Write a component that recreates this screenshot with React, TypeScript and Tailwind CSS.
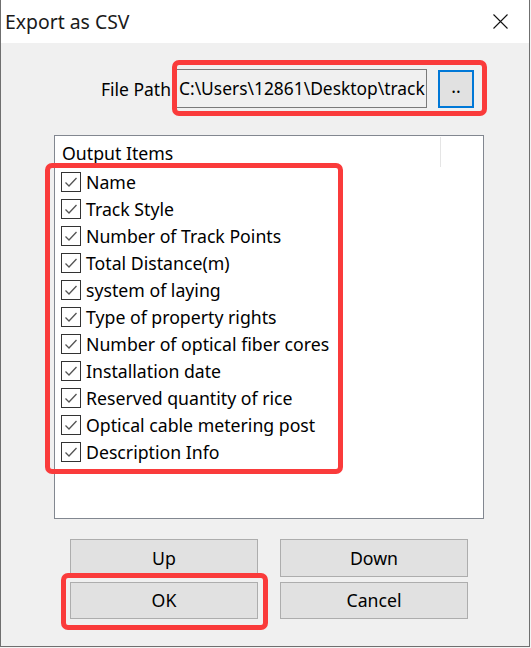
import React from "react";

const items = [
  "Name",
  "Track Style",
  "Number of Track Points",
  "Total Distance(m)",
  "system of laying",
  "Type of property rights",
  "Number of optical fiber cores",
  "Installation date",
  "Reserved quantity of rice",
  "Optical cable metering post",
  "Description Info",
];

const font = { fontFamily: '"Noto Sans", "Open Sans", sans-serif' };

function CheckBox() {
  return (
    <span className="flex h-[20px] w-[20px] shrink-0 items-center justify-center border border-[#333333] bg-white">
      <svg width="14" height="14" viewBox="0 0 14 14" fill="none">
        <path d="M1.5 7.5 L5 11 L12.5 3" stroke="#555555" strokeWidth="1.3" />
      </svg>
    </span>
  );
}

function DlgButton({ label }: { label: string }) {
  return (
    <button className="flex h-full w-[188px] items-center justify-center border border-[#adadad] bg-[#e1e1e1] text-[17.7px] text-black">
      {label}
    </button>
  );
}

export default function App() {
  return (
    <div className="relative h-[648px] w-[531px] bg-[#f4f4f4]" style={font}>
      <div className="flex h-[647px] w-[530px] flex-col border-x border-b border-[#6f6f6f] bg-[#f0f0f0]">
        {/* title bar */}
        <div className="flex h-[43px] shrink-0 items-center justify-between bg-white pl-[4px] pr-[21px]">
          <span className="text-[19.4px] text-[#1a1a1a]">Export as CSV</span>
          <svg width="15" height="15" viewBox="0 0 15 15">
            <path d="M0.5 0.5 L14.5 14.5 M14.5 0.5 L0.5 14.5" stroke="#111111" strokeWidth="1.1" />
          </svg>
        </div>

        {/* file path */}
        <div className="mt-[26px] flex h-[39px] items-center">
          <span className="w-[171px] pr-[1px] pt-[2px] text-right text-[17.5px] text-black">File Path</span>
          <div className="flex h-[39px] w-[255px] items-center overflow-hidden whitespace-nowrap border border-[#7a7a7a] bg-[#f0f0f0] pl-[6px] text-[17.4px] text-black">
            C:\Users\12861\Desktop\track
          </div>
          <button className="ml-[11px] flex h-[38px] w-[36px] items-center justify-center border-2 border-[#0078d7] bg-[#e1e1e1] pb-[4px] text-[17.7px] text-black">
            ..
          </button>
        </div>

        {/* item list */}
        <div className="ml-[53px] mt-[27px] flex h-[384px] w-[430px] flex-col border border-[#828790] bg-white">
          <div className="flex h-[32px] shrink-0 items-stretch">
            <div className="flex w-[385px] items-end pb-[1px] pl-[7px] text-[17.7px] text-black">Output Items</div>
            <div className="mt-[1px] h-[30px] w-px bg-[#e5e5e5]" />
          </div>
          <div className="flex flex-col">
            {items.map((item) => (
              <div key={item} className="flex h-[27px] items-center gap-[5px] pl-[6px]">
                <CheckBox />
                <span className="pt-[2px] text-[17.7px] leading-none text-black">{item}</span>
              </div>
            ))}
          </div>
        </div>

        {/* buttons */}
        <div className="ml-[69px] mt-[20px] grid w-[398px] grid-cols-2 gap-x-[22px] gap-y-[5px]">
          <div className="h-[38px]"><DlgButton label="Up" /></div>
          <div className="h-[38px]"><DlgButton label="Down" /></div>
          <div className="h-[37px]"><DlgButton label="OK" /></div>
          <div className="h-[37px]"><DlgButton label="Cancel" /></div>
        </div>
      </div>

      {/* red markers */}
      <div className="pointer-events-none absolute left-[172px] top-[60px] h-[56px] w-[315px] rounded-[7px] border-[5px] border-[#fa3b3b]" />
      <div className="pointer-events-none absolute left-[45px] top-[163px] h-[311px] w-[298px] rounded-[7px] border-[5px] border-[#fa3b3b]" />
      <div className="pointer-events-none absolute left-[61px] top-[573px] h-[57px] w-[207px] rounded-[7px] border-[5px] border-[#fa3b3b]" />
    </div>
  );
}
